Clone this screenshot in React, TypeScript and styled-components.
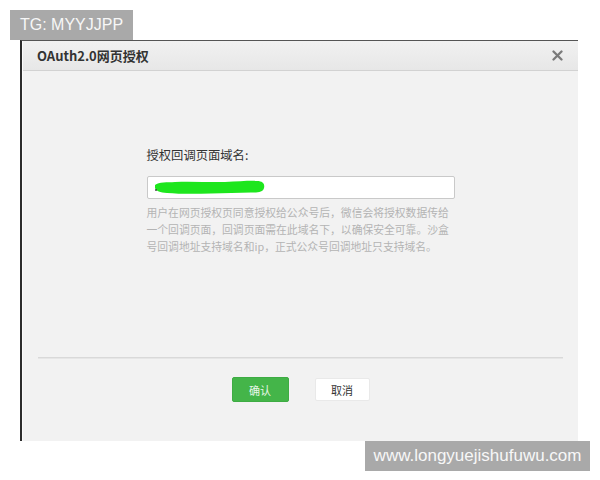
import React from "react";
import styled, { createGlobalStyle } from "styled-components";

const Global = createGlobalStyle`
  html, body { margin: 0; padding: 0; background: #ffffff; }
  body { font-family: "Noto Sans CJK SC", "Liberation Sans", sans-serif; }
`;

const Page = styled.div`
  width: 600px;
  height: 480px;
  display: flex;
  flex-direction: column;
  padding-top: 10px;
  box-sizing: border-box;
`;

const Badge = styled.div<{ $size: number; $align: "start" | "end"; $pad: number }>`
  align-self: ${(p) => (p.$align === "start" ? "flex-start" : "flex-end")};
  margin: 0 10px;
  height: 30px;
  padding: 0 ${(p) => p.$pad}px;
  display: flex;
  align-items: center;
  background: #a9a9a9;
  color: #f7f7f7;
  font-family: "Liberation Sans", Arial, sans-serif;
  font-size: ${(p) => p.$size}px;
`;

const Dialog = styled.div`
  margin-left: 20px;
  width: 558px;
  border-left: 2px solid #2c2c2c;
  border-top: 1px solid #555;
  box-sizing: border-box;
  display: flex;
  flex-direction: column;
  background: #f2f2f2;
`;

const Inner = styled.div`
  border-left: 1px solid #fbfbfb;
  display: flex;
  flex-direction: column;
`;

const Header = styled.div`
  height: 29px;
  display: flex;
  align-items: center;
  justify-content: space-between;
  padding: 0 15px 0 14px;
  background: linear-gradient(#f1f1f1, #e7e7e7);
  border-bottom: 1px solid #d2d2d2;
`;

const Title = styled.div`
  font-size: 13px;
  font-weight: 700;
  color: #333;
`;

const Body = styled.div`
  padding: 75px 0 0 0;
  display: flex;
  flex-direction: column;
  align-items: center;
`;

const Form = styled.div`
  width: 308px;
  display: flex;
  flex-direction: column;
`;

const Label = styled.div`
  font-size: 12.3px;
  line-height: 18px;
  color: #333;
`;

const Field = styled.div`
  margin-top: 12px;
  height: 23px;
  box-sizing: border-box;
  background: #fff;
  border: 1px solid #c9c9c9;
  border-radius: 2px;
  display: flex;
  align-items: center;
  padding-left: 5px;
`;

const Help = styled.div`
  margin-top: 5px;
  font-size: 10.8px;
  line-height: 17px;
  color: #b4b4b4;
  white-space: nowrap;
`;

const Divider = styled.div`
  margin: 102px 15px 0 15px;
  border-top: 1px solid #d9d9d9;
  border-bottom: 1px solid #e6e6e6;
`;

const Actions = styled.div`
  display: flex;
  justify-content: center;
  gap: 26px;
  padding: 18px 0 39px 0;
`;

const Button = styled.button<{ $primary?: boolean }>`
  width: ${(p) => (p.$primary ? 57 : 55)}px;
  margin-top: ${(p) => (p.$primary ? 0 : 1)}px;
  height: ${(p) => (p.$primary ? 25 : 23)}px;
  border-radius: 2px;
  border: 1px solid ${(p) => (p.$primary ? "#3eac43" : "#e9e9e9")};
  background: ${(p) => (p.$primary ? "#44b549" : "#ffffff")};
  color: ${(p) => (p.$primary ? "#e8f6e8" : "#333")};
  font-family: "Noto Sans CJK SC", sans-serif;
  font-size: 11px;
  padding: 0;
`;

const Close = () => (
  <svg width="11" height="11" viewBox="0 0 11 11">
    <path d="M1.5 1.5 L9.5 9.5 M9.5 1.5 L1.5 9.5" stroke="#7a7a7a" strokeWidth="2.3" strokeLinecap="round" />
  </svg>
);

const Scribble = () => (
  <svg width="112" height="15" viewBox="0 0 112 15">
    <path
      d="M2 5 C6 1.5 14 2.5 22 2 C38 1 55 2.5 72 2 C86 1.5 97 0.5 104 1 C110 1 112 4 111 8 C110 12 105 13 98 12.5 C85 12.5 72 13.5 58 13.5 C42 14 26 14 14 13 C7 12.5 3 11 2 8 Z"
      fill="#1de61d"
    />
    <circle cx="3" cy="10" r="0.9" fill="#333" />
  </svg>
);

export default function App() {
  return (
    <Page>
      <Global />
      <Badge $size={16} $pad={10} $align="start">TG: MYYJJPP</Badge>
      <Dialog>
        <Inner>
          <Header>
            <Title>OAuth2.0网页授权</Title>
            <Close />
          </Header>
          <Body>
            <Form>
              <Label>授权回调页面域名:</Label>
              <Field>
                <Scribble />
              </Field>
              <Help>
                用户在网页授权页同意授权给公众号后，微信会将授权数据传给
                <br />
                一个回调页面，回调页面需在此域名下，以确保安全可靠。沙盒
                <br />
                号回调地址支持域名和ip，正式公众号回调地址只支持域名。
              </Help>
            </Form>
          </Body>
          <Divider />
          <Actions>
            <Button $primary>确认</Button>
            <Button>取消</Button>
          </Actions>
        </Inner>
      </Dialog>
      <Badge $size={17} $pad={8.5} $align="end">www.longyuejishufuwu.com</Badge>
    </Page>
  );
}
